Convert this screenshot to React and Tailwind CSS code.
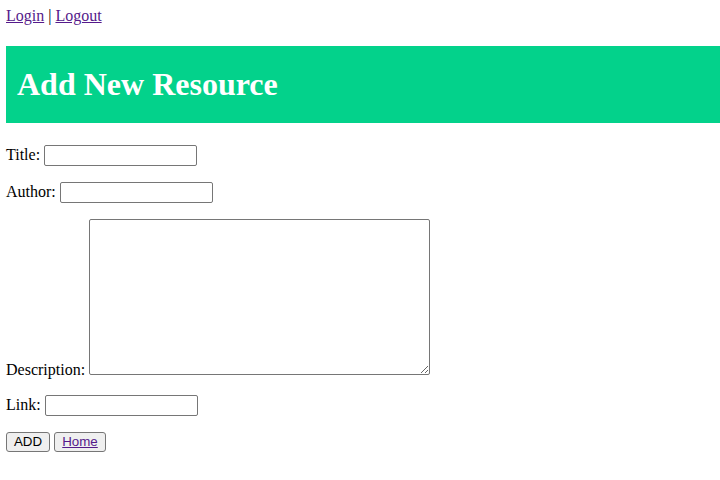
import React from "react";

export default function App() {
  const link = "text-[#551a8b] underline";
  const inputCls =
    "block w-[153px] h-[21px] border border-[#767676] rounded-[2px] bg-white px-[2px] text-[13px] outline-none";
  return (
    <div className="min-h-[480px] bg-white text-black font-['Liberation_Serif',serif] text-[16px] leading-[18px] px-[6px] pt-[7px]">
      <div className="h-[18px]">
        <a href="#" className={link}>Login</a> | <a href="#" className={link}>Logout</a>
      </div>
      <div className="mt-[21px] h-[77px] bg-[#03d28b] flex items-center pl-[11px] mr-[-6px]">
        <h1 className="text-[32px] font-bold text-white leading-[37px]">Add New Resource</h1>
      </div>
      <div className="flex flex-col">
        <div className="mt-[22px] flex items-end gap-[4px]">
          <span className="mb-[2px]">Title:</span>
          <input className={inputCls} />
        </div>
        <div className="mt-[16px] flex items-end gap-[4px]">
          <span className="mb-[2px]">Author:</span>
          <input className={inputCls} />
        </div>
        <div className="mt-[16px] flex items-end gap-[4px]">
          <span className="mb-[-4px]">Description:</span>
          <textarea className="block w-[341px] h-[156px] border border-[#767676] rounded-[2px] bg-white outline-none" />
        </div>
        <div className="mt-[20px] flex items-end gap-[4px]">
          <span className="mb-[2px]">Link:</span>
          <input className={inputCls} />
        </div>
        <div className="mt-[16px] flex items-center gap-[4px] font-['Liberation_Sans',sans-serif] text-[13.33px]">
          <button className="w-[44px] h-[20px] bg-[#efefef] border border-[#767676] rounded-[3px] text-black flex items-center justify-center">
            ADD
          </button>
          <button className="w-[52px] h-[20px] bg-[#efefef] border border-[#767676] rounded-[3px] flex items-center justify-center">
            <a href="#" className={link}>Home</a>
          </button>
        </div>
      </div>
    </div>
  );
}
